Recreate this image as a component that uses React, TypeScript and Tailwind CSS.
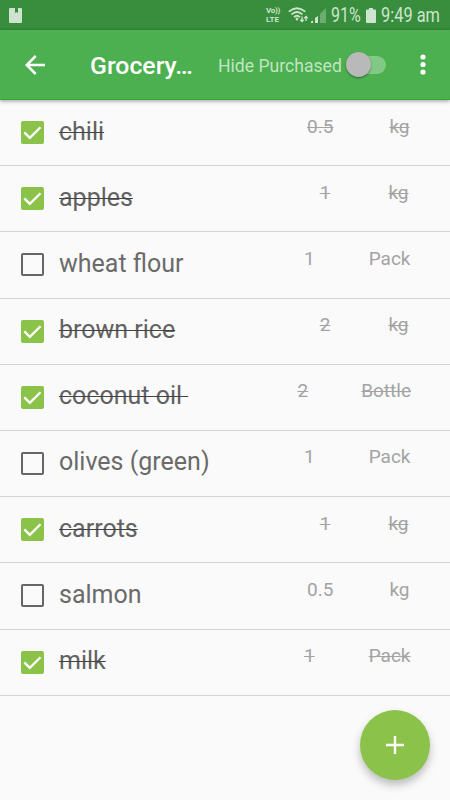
import { useState } from "react"

interface Item {
  name: string
  qty: string
  unit: string
  done: boolean
  spacing: string
}

const initialItems: Item[] = [
  { name: "chili", qty: "0.5", unit: "kg", done: true, spacing: "gap-[56px] pr-[40.5px]" },
  { name: "apples", qty: "1", unit: "kg", done: true, spacing: "gap-[58px] pr-[41.5px]" },
  { name: "wheat flour", qty: "1", unit: "Pack", done: false, spacing: "gap-[54px] pr-[39.5px]" },
  { name: "brown rice", qty: "2", unit: "kg", done: true, spacing: "gap-[58px] pr-[41.5px]" },
  { name: "coconut oil ", qty: "2", unit: "Bottle", done: true, spacing: "gap-[53px] pr-[39px]" },
  { name: "olives (green)", qty: "1", unit: "Pack", done: false, spacing: "gap-[54px] pr-[39.5px]" },
  { name: "carrots", qty: "1", unit: "kg", done: true, spacing: "gap-[58px] pr-[41.5px]" },
  { name: "salmon", qty: "0.5", unit: "kg", done: false, spacing: "gap-[56px] pr-[40.5px]" },
  { name: "milk", qty: "1", unit: "Pack", done: true, spacing: "gap-[54px] pr-[39.5px]" },
]

function StatusBar() {
  return (
    <div className="flex h-[30px] items-center bg-[#388e3c] pl-[9px] text-[#cfe4d0]">
      <svg width="13" height="15" viewBox="0 0 13 15" fill="currentColor">
        <path d="M1 0h5v5l1.500-1L9 5V0h3a1 1 0 0 1 1 1v13a1 1 0 0 1-1 1H1a1 1 0 0 1-1-1V1a1 1 0 0 1 1-1z" />
      </svg>
      <div className="ml-[244px] w-4 text-[8px] leading-[9.5px] font-bold">
        <div className="tracking-[-0.3px] whitespace-nowrap">Vo))</div>
        <div>LTE</div>
      </div>
      <svg className="ml-[6px]" width="21" height="16" viewBox="0 0 21 16" fill="none" stroke="currentColor">
        <path d="M.8 4.600Q9-2.200 17.200 4.600M3.500 7.400Q9 2.700 14.500 7.400M6 10.100Q9 7.500 12 10.100" strokeWidth="1.8" />
        <path d="M7.300 11.600L9 10.500l1.700 1.100L9 14z" fill="currentColor" stroke="none" />
        <path d="M14 9.500v5M12.300 12.800l1.700 1.700 1.700-1.700M18 14V9.500M16.300 11.200L18 9.500l1.700 1.700" strokeWidth="1.3" />
      </svg>
      <svg className="ml-[2px]" width="15" height="15" viewBox="0 0 15 15" fill="currentColor">
        <path d="M0 15v-1.500l2-1V15zM4 15v-5l3-2v7z" />
        <path d="M9 15V6l6-6v15z" opacity=".35" />
      </svg>
      <div className="ml-[5px] w-[31px] pt-[2px]">
        <span className="inline-block origin-left scale-x-[0.82] text-[19.5px] leading-6 whitespace-nowrap">91%</span>
      </div>
      <svg className="ml-[4px]" width="10" height="15" viewBox="0 0 10 15" fill="currentColor">
        <path d="M3 0h4v1.500h2a1 1 0 0 1 1 1V14a1 1 0 0 1-1 1H1a1 1 0 0 1-1-1V2.500a1 1 0 0 1 1-1h2z" />
      </svg>
      <div className="ml-[5px] w-[60px] pt-[2px]">
        <span className="inline-block origin-left scale-x-[0.84] text-[19.5px] leading-6 whitespace-nowrap">9:49 am</span>
      </div>
    </div>
  )
}

function Checkbox({ checked }: { checked: boolean }) {
  if (!checked) return <span className="block size-[23px] rounded-[2px] border-2 border-[#666]" />
  return (
    <span className="block size-[23px] rounded-[2px] bg-[#8bc34a]">
      <svg width="23" height="23" viewBox="0 0 23 23" fill="none" stroke="#fff" strokeWidth="2.3">
        <path d="M3.300 11.400L8.800 16.900L19.500 6.200" />
      </svg>
    </span>
  )
}

export default function App() {
  const [items, setItems] = useState(initialItems)
  const [hidePurchased, setHidePurchased] = useState(false)

  const toggle = (name: string) =>
    setItems(items.map((item) => (item.name === name ? { ...item, done: !item.done } : item)))

  const visible = items.filter((item) => !hidePurchased || !item.done)

  return (
    <div className="relative h-[800px] w-[450px] overflow-hidden bg-[#fafafa] font-['Roboto',sans-serif]">
      <StatusBar />
      <header className="relative flex h-[70px] items-center border-b border-[#2ea836] bg-[#4caf50] pl-[25px] text-white shadow-[0_1px_4px_rgba(0,0,0,0.4)]">
        <button aria-label="Back">
          <svg width="20" height="20" viewBox="0 0 20 20" fill="none" stroke="currentColor" strokeWidth="2.5">
            <path d="M20 10H2M10.700 1L1.700 10l9 9" />
          </svg>
        </button>
        <h1 className="ml-[45px] w-[128px] pt-[3px] text-[24.800px] font-medium whitespace-nowrap">Grocery…</h1>
        <span className="w-[124px] pt-[4px] text-[17.600px] whitespace-nowrap text-[#c2e4c3]">Hide Purchased</span>
        <button
          role="switch"
          aria-checked={hidePurchased}
          aria-label="Hide Purchased"
          onClick={() => setHidePurchased(!hidePurchased)}
          className={`ml-[4px] flex h-[18px] w-10 items-center rounded-full bg-[#83c986] ${hidePurchased ? "justify-end" : ""}`}
        >
          <span className="size-[25px] shrink-0 rounded-full bg-[#b9b9b9] shadow-[0_1px_2px_rgba(0,0,0,0.4)]" />
        </button>
        <button aria-label="More" className="ml-[33.500px]">
          <svg width="6" height="21" viewBox="0 0 6 21" fill="currentColor">
            <circle cx="3" cy="3" r="2.600" />
            <circle cx="3" cy="10.500" r="2.600" />
            <circle cx="3" cy="18" r="2.600" />
          </svg>
        </button>
      </header>

      <ul>
        {visible.map((item) => (
          <li
            key={item.name}
            onClick={() => toggle(item.name)}
            className="flex h-[66.200px] items-start border-b border-[#d4d4d4] pl-[21px]"
          >
            <div className="pt-[21px]">
              <Checkbox checked={item.done} />
            </div>
            <span
              className={`ml-[15px] pt-[16.500px] text-[25px] leading-[30px] whitespace-pre ${
                item.done ? "text-[#626262] line-through decoration-[#444] decoration-[1px]" : "text-[#6a6a6a]"
              }`}
            >
              {item.name}
            </span>
            <div
              className={`ml-auto flex pt-[14.500px] text-[19px] leading-[24px] text-[#a3a3a3] ${item.spacing} ${
                item.done ? "line-through decoration-[1px]" : ""
              }`}
            >
              <span>{item.qty}</span>
              <span>{item.unit}</span>
            </div>
          </li>
        ))}
      </ul>

      <button
        aria-label="Add item"
        className="absolute right-5 bottom-5 flex size-[70px] items-center justify-center rounded-full bg-[#8bc34a] shadow-[0_5px_9px_rgba(0,0,0,0.25)]"
      >
        <svg width="18" height="18" viewBox="0 0 18 18" stroke="#fff" strokeWidth="2.400">
          <path d="M9 0v18M0 9h18" />
        </svg>
      </button>
    </div>
  )
}
